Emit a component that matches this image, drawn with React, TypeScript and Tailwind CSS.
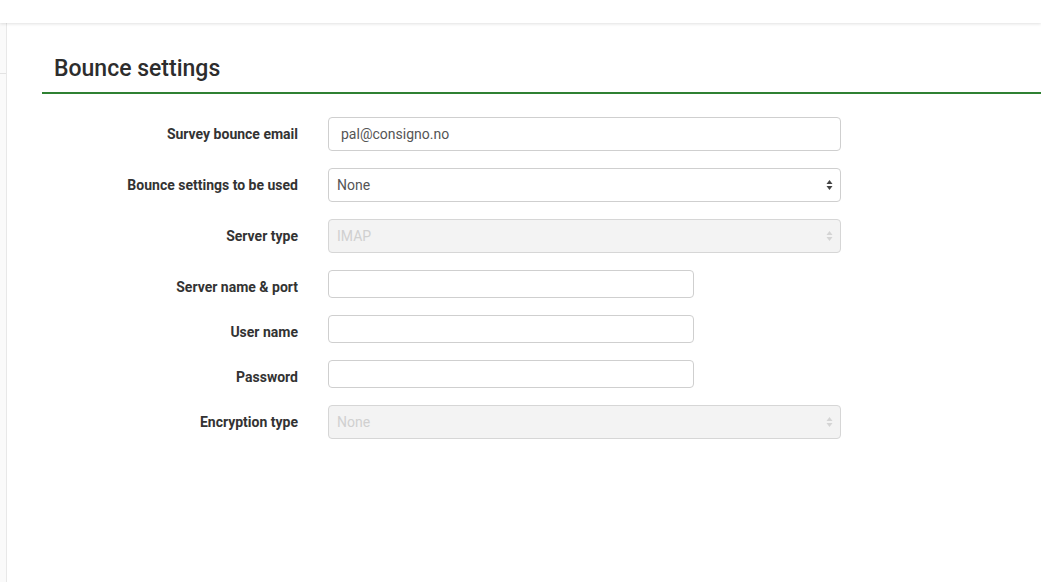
import React from "react";

const font = { fontFamily: "Roboto, 'Noto Sans', 'Liberation Sans', sans-serif" };

function Arrows({ disabled }: { disabled?: boolean }) {
  return (
    <svg width="7" height="11" viewBox="0 0 7 11" className="absolute right-[7px] top-1/2 -translate-y-1/2">
      <path d="M3.5 0.5 L6.5 4.5 L0.5 4.5 Z" fill={disabled ? "#d4d4d4" : "#444"} />
      <path d="M3.5 10.5 L6.5 6.5 L0.5 6.5 Z" fill={disabled ? "#d4d4d4" : "#444"} />
    </svg>
  );
}

function Select({ value, disabled }: { value: string; disabled?: boolean }) {
  return (
    <div
      className={`relative flex h-[34px] w-[513px] items-center rounded-[4px] border px-[8px] text-[14px] ${
        disabled ? "border-[#d6d6d6] bg-[#f3f3f3] text-[#d0d0d0]" : "border-[#cfcfcf] bg-white text-[#555]"
      }`}
    >
      {value}
      <Arrows disabled={disabled} />
    </div>
  );
}

function TextInput({ value, wide }: { value?: string; wide?: boolean }) {
  return (
    <div
      className={`flex items-center rounded-[4px] border border-[#cfcfcf] bg-white px-[12px] text-[14px] text-[#555] ${
        wide ? "h-[34px] w-[513px]" : "h-[28px] w-[366px]"
      }`}
    >
      {value}
    </div>
  );
}

const rows: { label: string; field: React.ReactNode }[] = [
  { label: "Survey bounce email", field: <TextInput wide value="pal@consigno.no" /> },
  { label: "Bounce settings to be used", field: <Select value="None" /> },
  { label: "Server type", field: <Select value="IMAP" disabled /> },
  { label: "Server name & port", field: <TextInput /> },
  { label: "User name", field: <TextInput /> },
  { label: "Password", field: <TextInput /> },
  { label: "Encryption type", field: <Select value="None" disabled /> },
];

export default function App() {
  return (
    <div className="flex h-[582px] w-[1041px] flex-col overflow-hidden bg-white" style={font}>
      <div className="relative z-10 h-[23px] shrink-0 bg-white shadow-[0_1px_3px_rgba(0,0,0,0.12)]" />
      <div className="flex flex-1">
        <div className="w-[7px] shrink-0 border-r border-[#e8e8e8] bg-[#fafafa]">
          <div className="h-[51px] border-b border-[#e3e3e3]" />
        </div>
        <div className="flex-1">
          <div className="ml-[35px] border-b-2 border-[#2f8132] pb-[8px] pt-[31px]">
            <h2 className="pl-[12px] text-[23px] font-medium leading-[30px] text-[#2d2d2d]">
              Bounce settings
            </h2>
          </div>
          <div className="mt-[23px] flex flex-col gap-[17px]">
            {rows.map((row) => (
              <div key={row.label} className="flex items-start gap-[30px]">
                <label className="w-[291px] pt-[7px] text-right text-[14px] font-bold leading-[20px] text-[#333]">
                  {row.label}
                </label>
                {row.field}
              </div>
            ))}
          </div>
        </div>
      </div>
    </div>
  );
}
